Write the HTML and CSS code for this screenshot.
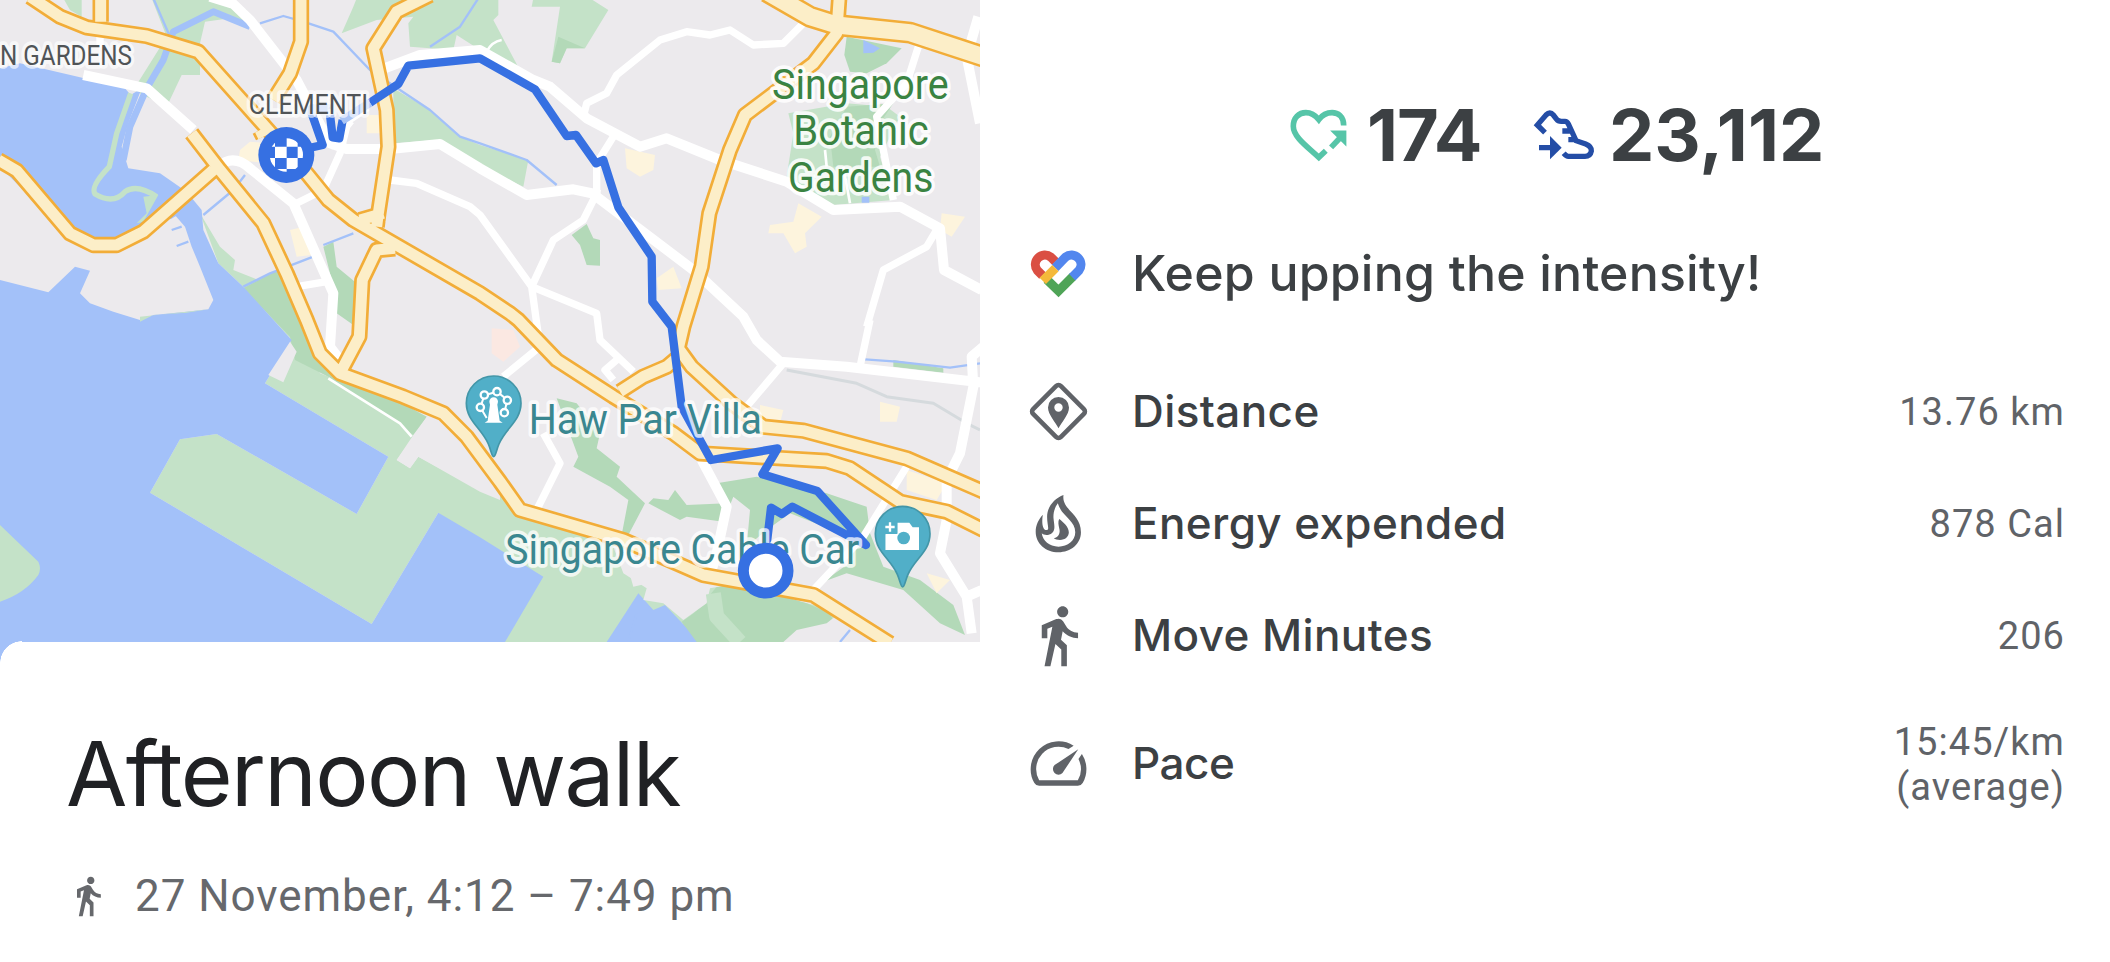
FILE: index.html
```html
<!DOCTYPE html>
<html lang="en">
<head>
<meta charset="utf-8">
<title>Afternoon walk</title>
<link rel="stylesheet" href="styles.css">
</head>
<body>
<main class="page">
  <section class="summary">
    <svg class="map" viewBox="0 0 2940 1926" role="img" aria-label="Route map">
      <defs>
        <path id="highways" d="M90 -10L180 50 260 82 440 108 595 155 800 385 920 520 985 600 1060 660 1440 880 1530 940 1555 960 1670 1080 1840 1190 2020 1300 2100 1360 2480 1383 2550 1405 2700 1505 2840 1535 2950 1590M-5 480L50 512 210 700 280 735 350 735 430 695 640 510M575 400L660 510 790 670 860 820 920 960 960 1060 1020 1120 1210 1190 1330 1240 1400 1310 1500 1445 1560 1530 1870 1620 2110 1725 2440 1785 2670 1930M302 -10V65M903 -10V125L870 220 820 300M780 390L790 410M1290 -15L1190 35 1120 145 1160 330 1165 440 1135 640 1130 680M1080 660L1150 640M1185 745L1130 750 1087 840 1078 1010 1025 1110M2518 -10L2510 100 2440 190 2235 345 2190 450 2128 640 2105 800 2050 980 2035 1045 2075 1100 2195 1210 2290 1280 2410 1292 2720 1375 2950 1475M2030 1075L2000 1100 1930 1130 1860 1175"/>
        <path id="expressway" d="M2300 -25L2430 50 2510 75 2730 98 2950 170"/>
        <clipPath id="flag"><circle cx="859" cy="465" r="50"/></clipPath>
      </defs>

      <g class="green">
        <path d="M455 -5H660L740 30 760 75 690 55 615 65 600 130 600 225 545 225 500 320 460 300 400 270 500 110Z"/>
        <path d="M190 -5H245V50L210 30Z"/>
        <path d="M1070 -5H1495V45L1480 60 1570 230 1500 205 1440 150 1370 105 1360 150 1230 140 1225 70 1240 50 1130 60 1025 100 1060 20Z"/>
        <path d="M1600 -5H1770L1825 30 1755 145 1700 145 1680 190 1655 185 1680 20 1595 20Z"/>
        <path d="M1180 265L1290 330 1380 410 1440 435 1585 480 1570 560 1440 500 1310 420 1180 430Z"/>
        <path d="M2365 340L2540 310 2660 320 2700 350 2640 470 2680 600 2500 615 2360 530 2380 400Z"/>
        <path d="M600 640L660 740 705 780 700 810 850 870 960 1120 1280 1250 1240 1310 1190 1380 1230 1405 1255 1370 1440 1470 1500 1480 1560 1540 1860 1620 1900 1760 2030 1730 2130 1750 2420 1810 2540 1840 2500 1890 2360 1926H1510L1600 1730 1440 1650 1315 1538 1115 1872 450 1478 540 1318 650 1302 1070 1542 1165 1370 795 1150 875 1020 730 860 655 790Z"/>
      </g>
      <g class="park">
        <path d="M730 865L840 805 880 830 940 1000 1010 1100 1280 1250 1240 1305 1180 1260 985 1130 885 1080 870 1010Z"/>
        <path d="M970 740L1000 725 1010 800 1070 850 1060 975 1010 940 1000 860Z"/>
        <path d="M1675 110L1755 145 1700 145 1680 190 1655 185Z"/>
        <path d="M2540 110L2705 145 2660 190 2600 220 2550 215 2533 165Z"/>
        <path d="M2540 320L2680 310 2640 370 2625 450 2640 500 2500 500 2490 410Z"/>
        <path d="M1715 705L1760 672 1780 715 1800 720 1800 797 1760 795 1740 735Z"/>
        <path d="M1670 1195L1730 1210 1800 1300 1790 1345 1860 1400 1850 1430 1935 1510 1885 1605 1865 1605 1885 1500 1830 1460 1720 1400 1735 1370Z"/>
        <path d="M1945 1510L1960 1495 2005 1500 2025 1470 2060 1515 2180 1510 2150 1450 2270 1430 2480 1480 2600 1520 2610 1600 2650 1700 2760 1740 2860 1815 2895 1905 2820 1870 2710 1770 2540 1720 2470 1745 2560 1680 2550 1610 2370 1540 2300 1590 2240 1640 2250 1530 2200 1490 2170 1565 2060 1550 2040 1560Z"/>
        <path d="M2150 1760L2220 1750 2420 1810 2490 1840 2510 1890 2350 1926H2000L2100 1820Z"/>
        <path d="M2680 1080L2830 1105V1118L2680 1100Z"/>
      </g>
      <path class="water" d="M0 205L60 190 240 232 375 265 392 285 425 265 385 370 365 440 385 505 480 520 560 575 605 630 610 690 655 790 730 860 875 1020 795 1150 1165 1370 1070 1542 650 1302 540 1318 450 1478 1115 1872 1315 1538 1440 1612 1630 1730 1515 1926H0Z"/>
      <path class="water" d="M1915 1780L1820 1926H2100L1995 1815 1960 1830ZM2590 120L2640 145 2620 158 2590 160ZM2585 590H2608V608H2585Z"/>
      <path class="park" d="M2125 1810L2190 1860 2200 1926H2090L2045 1865Z"/>
      <path class="land" d="M0 500L60 560 200 720 280 745 350 745 430 700 520 640 555 680 575 740 600 800 640 900 625 928 560 935 460 945 420 960 340 935 270 910 240 880 270 812 225 800 145 877 0 840ZM870 1025L890 1055 850 1147 805 1125ZM1240 1305L1285 1245 1500 1430V1500L1440 1475 1255 1370 1230 1405 1190 1380Z"/>
      <path class="land" d="M1840 1640L1870 1620 2110 1725 2240 1745 2130 1765 2120 1810 2050 1860 1990 1810 1930 1800 1940 1765 1870 1720Z"/>
      <path class="land" d="M2350 1926L2390 1890 2480 1870 2530 1830 2680 1926Z"/>
      <path class="green" d="M0 1575L115 1685Q125 1705 115 1725Q75 1780 0 1805ZM430 590L475 585 430 665 410 670 440 640ZM625 928L560 938 460 945 420 965 420 950 560 935Z"/>
      <path class="bank" d="M392 280L350 400 328 500Q270 560 285 582Q340 615 375 575Q410 550 470 590"/>
      <path class="bank-wide" d="M2140 1780L2150 1850 2220 1926"/>

      <g class="stream">
        <path class="river" d="M750 80L640 35 520 95 490 180 440 265 390 380 370 480"/>
        <path d="M460 -5L510 110M780 70L850 48 910 65 1000 95 1110 210 1290 330 1380 410 1440 430 1580 480 1670 555M610 645L700 570 735 525M730 860L810 820 940 770M970 735L1060 700M1435 -5L1380 80 1290 140M510 655L535 640M515 690L545 680M530 738L565 725M2595 1078L2690 1085 2850 1103 2940 1090M1910 1840L1885 1926M2550 1890L2520 1926"/>
      </g>
      <path class="rail" d="M2360 1110L2570 1150 2660 1190 2800 1210 2900 1270 2940 1290"/>

      <g class="poi">
        <path d="M750 425L800 430V490L715 480 720 450ZM870 690L905 682 935 765 890 770ZM1100 345H1140V400H1100ZM1875 445L1965 465 1960 510 1920 530 1880 505ZM2395 610L2465 650 2415 700 2420 740 2385 760 2350 700 2305 700 2310 675 2380 665ZM2020 800L2045 865 1975 870 1970 835ZM2825 640L2895 650 2855 710 2820 690ZM2640 1205L2700 1220 2690 1265 2640 1265ZM2720 1410L2840 1450 2810 1500 2720 1470ZM2280 1215L2350 1230 2340 1270 2280 1260ZM2780 1720L2850 1740 2810 1780Z"/>
        <path class="clinic" d="M1475 985L1540 990 1560 1040 1510 1085 1475 1060Z"/>
      </g>

      <g class="road">
        <path d="M630 -10L700 12 750 60 890 240 990 430 1040 447 1170 447 1320 432 1440 505 1580 585 1720 568 1800 585M250 225L440 265 580 390M655 500Q700 460 750 505L880 610 1000 880 990 1040 1020 1080M1140 210L1260 165 1440 150 1600 240 1650 260 1760 355 1920 440 2000 415 2160 480 2360 545 2500 630 2700 620 2820 685 2832 810 2945 870M1050 360L985 440M1100 320L1040 360"/>
        <path d="M1790 590L2080 810 2230 950 2270 1020 2340 1085 2540 1100 2950 1148M2105 1380L2180 1520 2150 1660 2135 1710M2900 170L2940 370M2935 50L2900 170M2950 1040L2915 1070 2920 1160 2880 1360 2840 1440 2840 1560 2820 1660 2900 1790 2915 1900M2945 1770L2900 1790"/>
        <path class="minor" d="M1750 350L1760 310 1820 280 1850 225 1980 120 2060 95 2130 105 2190 90 2260 135 2350 130 2410 70M1170 540L1250 550 1410 620 1440 645 1595 860 1610 970 1620 1040 1510 1130M1595 860L1660 720 1750 660 1790 580V490L1840 410M1595 860L1790 940 1800 1020 1900 1115M1850 1080L1815 1110 1840 1140M2350 1090L2240 1220M2610 960L2580 1100M2810 690L2780 740 2650 810 2600 980M2755 140L2720 250 2630 350 2680 600M2720 1400L2590 1610 2440 1770M1630 1300L1680 1390 1610 1530M1040 380L1020 460 970 570 890 610M890 860L980 845M300 105V140"/>
        <path class="thin" d="M985 1135L1200 1270 1235 1310M2475 450L2480 500M2530 500L2550 610M1460 155Q1475 125 1505 120"/>
      </g>

      <g class="edge"><use href="#highways"/><use class="broad" href="#expressway"/></g>
      <g class="fill"><use href="#highways"/><use class="broad" href="#expressway"/></g>

      <path class="route" d="M900 450L968 435 935 340M990 345L998 412 1018 415 1028 360M1110 308L1195 252 1225 197 1440 175 1605 268 1700 408 1728 405 1788 490 1810 480 1855 622 1955 770 1957 905 2015 980 2045 1220 2133 1380 2333 1345 2287 1423 2452 1473 2598 1635 2377 1520 2345 1542 2313 1523 2297 1660"/>
      <path class="route faded" d="M1025 362L1110 308M935 345V325H1000"/>

      <g class="label">
        <text x="0" y="195" textLength="396" lengthAdjust="spacingAndGlyphs">N GARDENS</text>
        <text x="746" y="343" textLength="358" lengthAdjust="spacingAndGlyphs">CLEMENTI</text>
      </g>
      <g class="label large botanic">
        <text x="2316" y="297" textLength="530" lengthAdjust="spacingAndGlyphs">Singapore</text>
        <text x="2380" y="436" textLength="406" lengthAdjust="spacingAndGlyphs">Botanic</text>
        <text x="2364" y="576" textLength="436" lengthAdjust="spacingAndGlyphs">Gardens</text>
      </g>
      <g class="label large sight">
        <text x="1586" y="1302" textLength="700" lengthAdjust="spacingAndGlyphs">Haw Par Villa</text>
        <text x="1516" y="1693" textLength="1062" lengthAdjust="spacingAndGlyphs">Singapore Cable Car</text>
      </g>

      <g class="pin">
        <path d="M1481 1370C1475 1370 1473 1350 1465 1332C1445 1285 1399 1262 1399 1210A82 82 0 0 1 1563 1210C1563 1262 1517 1285 1497 1332C1489 1350 1487 1370 1481 1370Z"/>
        <path class="glyph" d="M1470 1214L1468 1205A13 13 0 1 1 1494 1205L1492 1214 1499 1262 1508 1268H1454L1463 1262Z"/>
        <path class="chain" d="M1460 1254L1441 1222 1453 1186 1491 1175 1522 1200 1513 1238"/>
        <g class="bead"><circle cx="1441" cy="1222" r="11"/><circle cx="1453" cy="1185" r="11"/><circle cx="1491" cy="1175" r="11"/><circle cx="1522" cy="1201" r="11"/><circle cx="1513" cy="1238" r="11"/></g>
        <path d="M2708 1761C2702 1761 2700 1741 2692 1723C2672 1676 2626 1655 2626 1601A82 82 0 0 1 2790 1601C2790 1655 2744 1676 2724 1723C2716 1741 2714 1761 2708 1761Z"/>
        <path class="glyph" d="M2657 1600H2692V1568H2728L2738 1582H2757V1650H2657Z"/>
        <path class="plus-gap" d="M2652 1564H2692V1603H2652Z"/>
        <path class="plus" d="M2670 1567V1595M2656 1581H2684"/>
        <path class="glyph" d="M2657 1602H2700V1650H2657Z"/>
        <circle class="lens" cx="2711" cy="1614" r="19"/>
      </g>

      <g class="finish">
        <circle cx="859" cy="465" r="84"/>
        <path clip-path="url(#flag)" d="M825 440H860V474H825ZM860 474H893V507H860ZM860 410H893V440H860ZM893 440H915V474H893ZM805 474H825V507H805ZM825 507H860V520H825ZM805 420H825V440H805Z"/>
      </g>
      <circle class="start" cx="2297" cy="1712" r="67"/>
    </svg>

    <div class="sheet">
      <h1 class="title">Afternoon walk</h1>
      <p class="when">
        <svg class="when-icon" viewBox="0 0 24 24"><path d="M13.500 5.500c1.100 0 2-.9 2-2s-.9-2-2-2-2 .9-2 2 .9 2 2 2zM9.800 8.900L7 23h2.100l1.800-8 2.100 2v6h2v-7.500l-2.100-2 .6-3C14.800 12 16.800 13 19 13v-2c-1.900 0-3.500-1-4.300-2.400l-1-1.600c-.4-.6-1-1-1.700-1-.3 0-.5.1-.8.1L6 8.300V13h2V9.600l1.800-.7"/></svg>
        <span>27 November, 4:12 – 7:49 pm</span>
      </p>
    </div>
  </section>

  <section class="details">
    <div class="totals">
      <svg class="heart-icon" viewBox="25 35 184 170">
        <path class="line" d="M193 90C193 62 175 51 158 51C140 51 127 60 118 72C108 60 96 51 79 51C58 51 41 66 41 92C41 125 85 155 118 186L139 166"/>
        <path class="line" d="M155 156L186 123"/>
        <path class="solid" d="M152 105H201V153Z"/>
      </svg>
      <span class="total points">174</span>
      <svg class="shoe-icon" viewBox="757 40 192 160">
        <path class="line" d="M796 113L773 90 799 60Q811 48 821 60L831 73Q835 79 845 79H856Q862 79 866 87L889 137 918 147Q936 154 935 168Q932 184 916 184H866Q860 184 852 175M848 108H874M866 134H888M778 158H815"/>
        <path class="solid" d="M811 123L846 158 811 193Z"/>
      </svg>
      <span class="total steps">23,112</span>
    </div>

    <div class="row tip">
      <svg class="icon" viewBox="15 1 200 200">
        <g class="fit">
          <path class="red" d="M67 107L52 92A28.500 28.500 0 0 1 92 52L106 66"/>
          <path class="green-arm" d="M80 119L115 153 158 110"/>
          <path class="blue" d="M105 84L136 52A28.500 28.500 0 0 1 176 92L156 112"/>
          <path class="yellow" d="M68 123L106 85"/>
        </g>
      </svg>
      <span class="name">Keep upping the intensity!</span>
    </div>
    <div class="row">
      <svg class="icon" viewBox="-33.5 -33.5 67 67">
        <rect class="diamond" x="-19.700" y="-19.700" width="39.400" height="39.400" rx="3.500" transform="rotate(45)"/>
        <path fill-rule="evenodd" d="M0 16.700C-3 11-10.500 3-10.500-4A10.500 10.500 0 0 1 10.500-4C10.500 3 3 11 0 16.700ZM0-8.200A4.200 4.200 0 1 0 0 .2A4.200 4.200 0 1 0 0-8.200Z"/>
      </svg>
      <span class="name">Distance</span>
      <span class="value">13.76 km</span>
    </div>
    <div class="row">
      <svg class="icon" viewBox="42 60 188 201" preserveAspectRatio="none">
        <path fill-rule="evenodd" d="M150 75C144 120 199 130 199 187C199 222 170 247 136 247C100 247 72 220 72 185C72 165 80 148 92 134C88 160 92 180 102 180C112 180 104 165 104 140C104 110 125 85 150 75ZM134 100C124 115 121 130 122 145C124 165 128 180 118 189C108 198 95 196 89 190C92 212 110 230 136 230C162 230 183 212 183 187C183 150 145 140 134 100Z"/>
        <path d="M138 147C148 155 165 170 165 187C165 200 155 210 140 210C133 210 127 208 123 205C136 202 142 190 138 175C136 165 134 155 138 147Z"/>
      </svg>
      <span class="name">Energy expended</span>
      <span class="value">878 Cal</span>
    </div>
    <div class="row">
      <svg class="icon" viewBox="0 0 24 24"><path d="M13.500 5.500c1.100 0 2-.9 2-2s-.9-2-2-2-2 .9-2 2 .9 2 2 2zM9.800 8.900L7 23h2.100l1.800-8 2.100 2v6h2v-7.500l-2.100-2 .6-3C14.800 12 16.800 13 19 13v-2c-1.900 0-3.500-1-4.300-2.400l-1-1.600c-.4-.6-1-1-1.700-1-.3 0-.5.1-.8.1L6 8.300V13h2V9.600l1.800-.7"/></svg>
      <span class="name">Move Minutes</span>
      <span class="value">206</span>
    </div>
    <div class="row tall">
      <svg class="icon" viewBox="0 0 24 24"><path d="M20.380 8.570l-1.230 1.850a8 8 0 0 1-.22 7.580H5.070A8 8 0 0 1 15.580 6.850l1.850-1.230A10 10 0 0 0 3.350 19a2 2 0 0 0 1.720 1h13.850a2 2 0 0 0 1.740-1 10 10 0 0 0-.27-10.440zm-9.790 6.840a2 2 0 0 0 2.830 0l5.660-8.490-8.490 5.660a2 2 0 0 0 0 2.830z"/></svg>
      <span class="name">Pace</span>
      <span class="value">15:45/km<br>(average)</span>
    </div>
  </section>
</main>
</body>
</html>
```
FILE: styles.css
```css
* { box-sizing: border-box; }
body { margin: 0; background: #fff; }
.page { display: grid; grid-template-columns: 980px 1fr; height: 962px; overflow: hidden; }

/* Map and workout title */
.summary { display: flex; flex-direction: column; min-width: 0; }
.map { display: block; width: 980px; height: 642px; flex: none; background: #eceaed; }
.sheet { flex: 1; padding: 74px 0 0 66px; background: #fff; position: relative; }
.sheet::before {
  content: ""; position: absolute; left: 0; top: -1px; width: 22px; height: 22px;
  background: radial-gradient(circle at 22px 22px, #fff 21.500px, #a3c1f9 22px);
}
.title {
  margin: 0; font: 400 89px/116px Inter, sans-serif;
  letter-spacing: -1.600px; color: #202124; white-space: nowrap;
}
.when {
  display: flex; align-items: center; gap: 25px; margin: 34px 0 0 1px; height: 60px;
  font: 400 44px/60px Roboto, sans-serif; letter-spacing: .95px; color: #66686c; white-space: nowrap;
}
.when-icon { width: 44px; height: 44px; fill: #66686c; margin-left: -1px; }

/* Map layers */
.water { fill: #a3c1f9; }
.land { fill: #eceaed; }
.green { fill: #c4e2c8; }
.park { fill: #b3d9b8; }
.bank, .bank-wide, .stream, .rail, .road, .edge, .fill, .route { fill: none; stroke-linejoin: round; }
.bank { stroke: #c4e2c8; stroke-width: 16; }
.bank-wide { stroke: #c4e2c8; stroke-width: 45; }
.stream { stroke: #a3c1f9; stroke-width: 7; }
.stream .river { stroke-width: 20; }
.rail { stroke: #d5dadd; stroke-width: 9; }
.poi { fill: #fdf4dd; }
.poi .clinic { fill: #fbe8e2; }
.road { stroke: #fff; stroke-width: 30; }
.road .minor { stroke-width: 22; }
.road .thin { stroke-width: 8; }
.edge { stroke: #f2ad38; stroke-width: 49; }
.fill { stroke: #fceec8; stroke-width: 33; }
.edge .broad { stroke-width: 66; }
.fill .broad { stroke-width: 51; }
.route { stroke: #3670e2; stroke-width: 25; }
.faded { stroke: #a9c4f5; }
.label {
  font: 400 82px Roboto, sans-serif; fill: #505457;
  stroke: rgba(255, 255, 255, .65); stroke-width: 22; stroke-linejoin: round; paint-order: stroke;
}
.large { font-size: 128px; }
.botanic { fill: #3a8342; stroke: rgba(255, 255, 255, .85); }
.sight { fill: #3a8790; stroke: rgba(255, 255, 255, .75); }
.pin { fill: #51afc8; stroke: #4396a8; stroke-width: 5; }
.pin .glyph { fill: #fff; stroke: none; }
.pin .plus-gap { stroke: none; }
.pin .chain { fill: none; stroke: #fff; stroke-width: 6; }
.pin .bead { stroke: #fff; stroke-width: 7; }
.pin .plus { fill: none; stroke: #fff; stroke-width: 7; }
.pin .lens { stroke: none; }
.finish { fill: #3670e2; }
.finish path { fill: #fff; }
.start { fill: #fff; stroke: #3670e2; stroke-width: 33; }

/* Totals and metrics */
.details { display: flex; flex-direction: column; padding: 95px 45px 0 45px; }
.totals { display: flex; align-items: center; height: 80px; padding-left: 263px; }
.heart-icon { width: 61px; height: 57px; flex: none; }
.shoe-icon { width: 64px; height: 54px; flex: none; margin-left: 50px; }
.heart-icon .line { fill: none; stroke: #56c5a8; stroke-width: 17; }
.heart-icon .solid { fill: #56c5a8; }
.shoe-icon .line { fill: none; stroke: #244da6; stroke-width: 16; }
.shoe-icon .solid { fill: #244da6; }
.total { font: 700 72px/80px Inter, sans-serif; color: #3c4043; white-space: nowrap; }
.points { width: 115px; margin-left: 18px; letter-spacing: -1px; }
.steps { margin-left: 13px; letter-spacing: 0; }
.row { display: flex; align-items: center; height: 112px; flex: none; }
.tip { height: 80px; margin: 58px 0 42px; }
.tall { height: 144px; }
.icon { width: 67px; height: 67px; flex: none; fill: #606368; }
.name {
  flex: 1; margin-left: 40px; font: 500 44px/60px Inter, sans-serif;
  letter-spacing: .4px; color: #3c4043; white-space: nowrap;
}
.tip .name { font-size: 50px; letter-spacing: .2px; }
.tall .name { letter-spacing: -.5px; }
.value {
  font: 400 38px/45px Roboto, sans-serif; letter-spacing: 1.050px; padding-top: 3px;
  color: #606368; text-align: right; white-space: nowrap;
}
.diamond { fill: none; stroke: #606368; stroke-width: 4.600; }
.fit { fill: none; stroke-width: 27; }
.red { stroke: #da4f43; }
.blue { stroke: #5286ee; }
.green-arm { stroke: #4fa457; }
.yellow { stroke: #f4b93a; }
```
